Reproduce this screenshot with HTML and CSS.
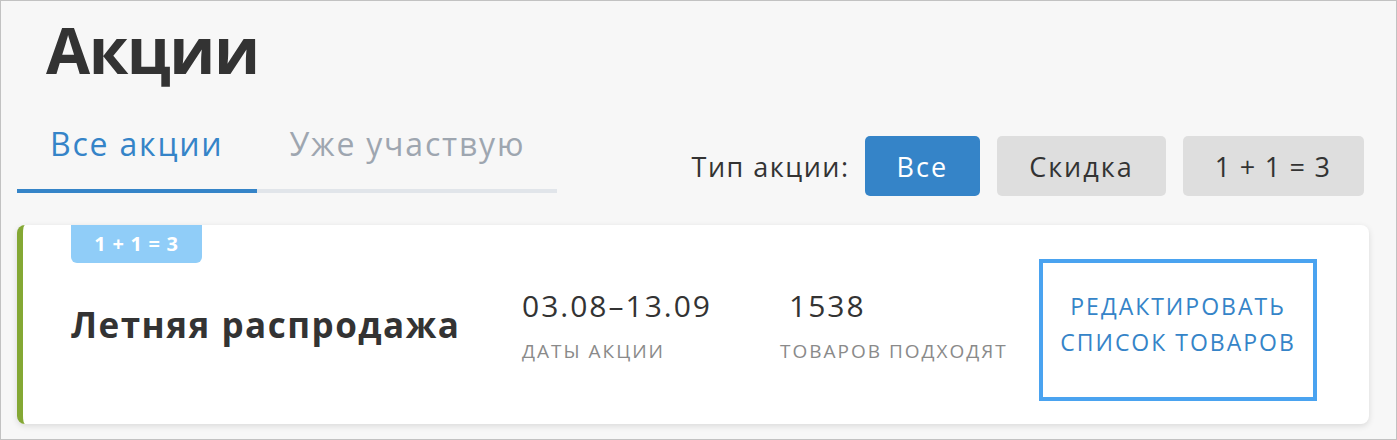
FILE: index.html
```html
<!DOCTYPE html>
<html lang="ru">
<head>
<meta charset="utf-8">
<title>Акции</title>
<link rel="stylesheet" href="styles.css">
</head>
<body>
<div class="page">
  <h1 class="title">Акции</h1>
  <div class="toolbar">
    <div class="tabs">
      <div class="tab active">Все акции</div>
      <div class="tab">Уже участвую</div>
    </div>
    <div class="filter">
      <span class="filter-label">Тип акции:</span>
      <button class="chip chip-active">Все</button>
      <button class="chip">Скидка</button>
      <button class="chip">1 + 1 = 3</button>
    </div>
  </div>
  <div class="card">
    <div class="badge">1 + 1 = 3</div>
    <div class="card-name">Летняя распродажа</div>
    <div class="stat stat-dates">
      <div class="stat-value">03.08–13.09</div>
      <div class="stat-label">Даты акции</div>
    </div>
    <div class="stat stat-count">
      <div class="stat-value">1538</div>
      <div class="stat-label">Товаров подходят</div>
    </div>
    <button class="edit-btn">Редактировать<br>список товаров</button>
  </div>
</div>
</body>
</html>
```

FILE: styles.css
```css
* { box-sizing: border-box; }
html, body { margin: 0; padding: 0; }
body {
  font-family: "Open Sans", "Noto Sans", sans-serif;
  color: #333333;
  background: #f7f7f7;
}
.page {
  width: 1397px;
  height: 440px;
  border: 1px solid #c2c2c2;
  background: #f7f7f7;
  overflow: hidden;
}
.title {
  margin: 17px 0 0 45px;
  font-size: 64px;
  line-height: 64px;
  font-weight: 700;
  letter-spacing: -1.5px;
  color: #333333;
}
.toolbar {
  display: flex;
  justify-content: space-between;
  align-items: flex-end;
  margin-top: 41px;
  padding: 0 32px 0 16px;
}
.tabs {
  display: flex;
  flex: none;
  width: 540px;
  border-bottom: 4px solid #e1e5ea;
}
.tab {
  flex: none;
  white-space: nowrap;
  font-size: 32px;
  line-height: 42px;
  letter-spacing: 1.8px;
  padding: 0 33px 24px;
  color: #9ea6b0;
  margin-bottom: -4px;
  border-bottom: 4px solid transparent;
}
.tab.active {
  color: #3584c8;
  border-bottom-color: #3584c8;
}
.filter {
  display: flex;
  flex: none;
  align-items: center;
  gap: 17px;
  margin-bottom: -3px;
  white-space: nowrap;
}
.filter-label {
  font-size: 27px;
  letter-spacing: 1.5px;
  margin-right: -2px;
  color: #333333;
}
.chip {
  font-family: inherit;
  font-size: 27px;
  letter-spacing: 2px;
  word-spacing: -1.5px;
  height: 60px;
  padding: 0 32px;
  border: none;
  border-radius: 5px;
  background: #dedede;
  color: #333333;
}
.chip-active {
  background: #3584c8;
  color: #ffffff;
}
.card {
  position: relative;
  display: flex;
  align-items: center;
  margin: 32px 27px 0 16px;
  height: 199px;
  background: #ffffff;
  border-left: 6px solid #84a834;
  border-radius: 8px;
  box-shadow: 0 2px 6px rgba(0, 0, 0, 0.12);
  padding: 0 52px 0 48px;
}
.badge {
  position: absolute;
  top: 0;
  left: 48px;
  width: 131px;
  height: 38px;
  background: #90cdf8;
  color: #ffffff;
  border-radius: 0 0 6px 6px;
  font-size: 20px;
  font-weight: 700;
  letter-spacing: 0.7px;
  text-align: center;
  line-height: 38px;
}
.card-name {
  flex: none;
  white-space: nowrap;
  font-size: 35px;
  font-weight: 700;
  letter-spacing: 1.5px;
  width: 451px;
  color: #333333;
}
.stat {
  flex: none;
  display: flex;
  flex-direction: column;
  gap: 12px;
  white-space: nowrap;
}
.stat-dates { width: 258px; }
.stat-count { width: 258px; }
.stat-value {
  font-size: 30px;
  line-height: 40px;
  letter-spacing: 2px;
  color: #333333;
}
.stat-count .stat-value { padding-left: 9px; }
.stat-label {
  font-size: 19px;
  line-height: 26px;
  letter-spacing: 2px;
  text-transform: uppercase;
  color: #8a8a8a;
}
.edit-btn {
  flex: none;
  font-family: inherit;
  margin-left: auto;
  margin-top: 11px;
  width: 278px;
  height: 142px;
  padding: 0 0 13px;
  border: 4px solid #4aa3f0;
  background: #ffffff;
  color: #3584c8;
  font-size: 23px;
  line-height: 36px;
  letter-spacing: 2px;
  text-transform: uppercase;
  text-align: center;
  white-space: nowrap;
}
```
